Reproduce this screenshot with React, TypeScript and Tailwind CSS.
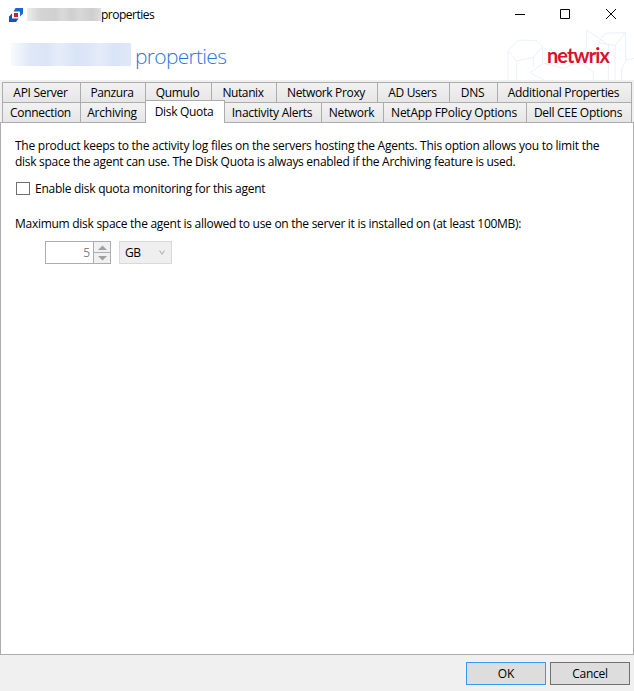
import React from "react";

type TabDef = { label: string; width: string; tracking: string };

const topTabs: TabDef[] = [
  { label: "API Server", width: "w-[79px]", tracking: "tracking-[-0.28px]" },
  { label: "Panzura", width: "w-[66px]", tracking: "tracking-[-0.4px]" },
  { label: "Qumulo", width: "w-[67px]", tracking: "tracking-[-0.3px]" },
  { label: "Nutanix", width: "w-[66px]", tracking: "tracking-[-0.4px]" },
  { label: "Network Proxy", width: "w-[102px]", tracking: "tracking-[-0.35px]" },
  { label: "AD Users", width: "w-[73px]", tracking: "tracking-[-0.35px]" },
  { label: "DNS", width: "w-[49px]", tracking: "tracking-[-0.3px]" },
  { label: "Additional Properties", width: "w-[135px]", tracking: "tracking-[-0.32px]" },
];

const bottomTabs: TabDef[] = [
  { label: "Connection", width: "w-[79px]", tracking: "tracking-[-0.3px]" },
  { label: "Archiving", width: "w-[66px]", tracking: "tracking-[-0.2px]" },
  { label: "Disk Quota", width: "w-[80px]", tracking: "tracking-[-0.3px]" },
  { label: "Inactivity Alerts", width: "w-[98px]", tracking: "tracking-[-0.27px]" },
  { label: "Network", width: "w-[63px]", tracking: "tracking-[-0.35px]" },
  { label: "NetApp FPolicy Options", width: "w-[144px]", tracking: "tracking-[-0.25px]" },
  { label: "Dell CEE Options", width: "w-[106px]", tracking: "tracking-[-0.3px]" },
];

function Tab({ tab, selected }: { tab: TabDef; selected?: boolean }) {
  const look = selected
    ? "z-10 -mt-[2px] h-[23px] border-b-0 bg-white"
    : "h-[21px] bg-gradient-to-b from-[#f2f2f2] to-[#e6e6e6]";
  return (
    <div
      className={`relative -mr-px flex shrink-0 items-center justify-center whitespace-nowrap border border-[#acacac] pr-[2px] ${look} ${tab.width} ${tab.tracking}`}
    >
      {tab.label}
    </div>
  );
}

function AppIcon() {
  return (
    <svg width="14" height="14" viewBox="0 0 14 14">
      <path d="M6.500 0H14v5.500L11 8.500V3.500H4.500z" fill="#1467dc" />
      <path d="M0 8.500l3-3V10.500h6.500L7 14H0z" fill="#0c56c6" />
      <path d="M5 5h4v4H5z" fill="#d0202c" />
    </svg>
  );
}

function HeaderArt() {
  return (
    <svg className="absolute right-0 top-0" width="154" height="80" viewBox="0 0 462 240" fill="none" stroke="#eaf1fc" strokeWidth="3">
      <path d="M84 152l32-32 54 2 18 18-28 32-50 11zM84 152v88M110 183v57M160 172v30M188 140v50" />
      <path d="M150 218l40-28 60 14M150 218l42 22M250 204l50-18 40 30v24" />
      <path d="M320 150V90l63 43M355 128l20-28 62-2-32 39-50-9zM355 128v60M385 135v105M405 137v103M437 98v82M425 240v-35l15-25 22-5" />
    </svg>
  );
}

export default function App() {
  return (
    <div className="flex h-[691px] w-[634px] flex-col overflow-hidden bg-[#f0f0f0] font-['Open_Sans','Noto_Sans',sans-serif] text-[12px] text-black">
      <header className="relative h-[80px] bg-white">
        <HeaderArt />
        <div className="relative flex h-[30px] items-center pl-[9px]">
          <AppIcon />
          <div className="ml-[4px] mt-[-1px] h-[13px] w-[74px] bg-[linear-gradient(90deg,#ececec,#d4d4d4_18%,#d0d0d0_38%,#dadada_48%,#cfcfcf_60%,#d8d8d8_72%,#cecece_88%,#dedede)]" />
          <span className="tracking-[-0.5px]">properties</span>
          <svg className="ml-auto mr-[16px] mt-[-2px]" width="103" height="12" viewBox="0 0 103 12" fill="none" stroke="#000">
            <path d="M0 6.500h10M45.500 1.500h9v9h-9z" />
            <path d="M91 1l10 10M101 1L91 11" />
          </svg>
        </div>
        <div className="relative flex h-[50px] items-center pl-[11px]">
          <div className="mt-[-1px] h-[23px] w-[120px] bg-[linear-gradient(90deg,#f8fafd,#e0e8f7_16%,#dbe5f6_30%,#e6edf9_40%,#d9e4f6_54%,#dce6f7_64%,#e5ecf9_74%,#d9e4f6_86%,#dfe8f8)]" />
          <h1 className="ml-[4px] mt-[3px] text-[21px] font-light tracking-[-0.7px] text-[#2b78d8]">properties</h1>
          <span className="ml-auto mr-[25px] font-['Lato','Open_Sans',sans-serif] text-[20px] font-bold tracking-[-0.9px] text-[#d9112c]">netwrix</span>
        </div>
      </header>
      <nav className="mt-[2px] pl-[2px]">
        <div className="flex h-[20px]">
          {topTabs.map((tab) => (
            <Tab key={tab.label} tab={tab} />
          ))}
        </div>
        <div className="flex h-[20px]">
          {bottomTabs.map((tab) => (
            <Tab key={tab.label} tab={tab} selected={tab.label === "Disk Quota"} />
          ))}
        </div>
      </nav>
      <main className="h-[533px] border border-[#acacac] bg-white pl-[14px] pt-[15px]">
        <p className="whitespace-nowrap leading-[16px]">
          <span className="tracking-[-0.245px]">
            The product keeps to the activity log files on the servers hosting the Agents. This option allows you to limit the
          </span>
          <br />
          <span className="tracking-[-0.285px]">
            disk space the agent can use. The Disk Quota is always enabled if the Archiving feature is used.
          </span>
        </p>
        <label className="ml-px mt-[11px] flex h-[16px] items-center gap-[5px] tracking-[-0.27px]">
          <span className="mt-[-1px] h-[13px] w-[14px] border border-[#707070] bg-white" />
          Enable disk quota monitoring for this agent
        </label>
        <p className="mt-[19px] whitespace-nowrap leading-[16px] tracking-[-0.275px]">
          Maximum disk space the agent is allowed to use on the server it is installed on (at least 100MB):
        </p>
        <div className="ml-[30px] mt-[9px] flex gap-[8px]">
          <div className="flex h-[23px] w-[66px] border border-[#abadb3]">
            <span className="flex flex-1 items-center justify-end pr-[3px] text-[#838383]">5</span>
            <div className="flex w-[17px] flex-col border-l border-[#abadb3] bg-[#f0f0f0]">
              <span className="flex flex-1 items-center justify-center border-b border-[#abadb3]">
                <svg width="9" height="5" viewBox="0 0 9 5"><path d="M0 5l4.500-4.500L9 5z" fill="#a0a0a0" /></svg>
              </span>
              <span className="flex flex-1 items-center justify-center">
                <svg width="9" height="5" viewBox="0 0 9 5"><path d="M0 0l4.500 4.500L9 0z" fill="#a0a0a0" /></svg>
              </span>
            </div>
          </div>
          <div className="flex h-[23px] w-[53px] items-center justify-between border border-[#d9d9d9] bg-[#efefef] pl-[5px] pr-[6px] tracking-[-0.4px]">
            GB
            <svg width="6" height="5" viewBox="0 0 6 5" fill="none" stroke="#b5b5b5" strokeWidth="1.200"><path d="M0.500 0.500l2.500 3.500 2.500-3.500" /></svg>
          </div>
        </div>
      </main>
      <footer className="flex justify-end gap-[4px] pr-[4px] pt-[7px]">
        <button className="h-[23px] w-[80px] border border-[#3399ff] bg-[#dddddd]">OK</button>
        <button className="h-[23px] w-[80px] border border-[#707070] bg-[#dddddd] tracking-[-0.3px]">Cancel</button>
      </footer>
    </div>
  );
}
